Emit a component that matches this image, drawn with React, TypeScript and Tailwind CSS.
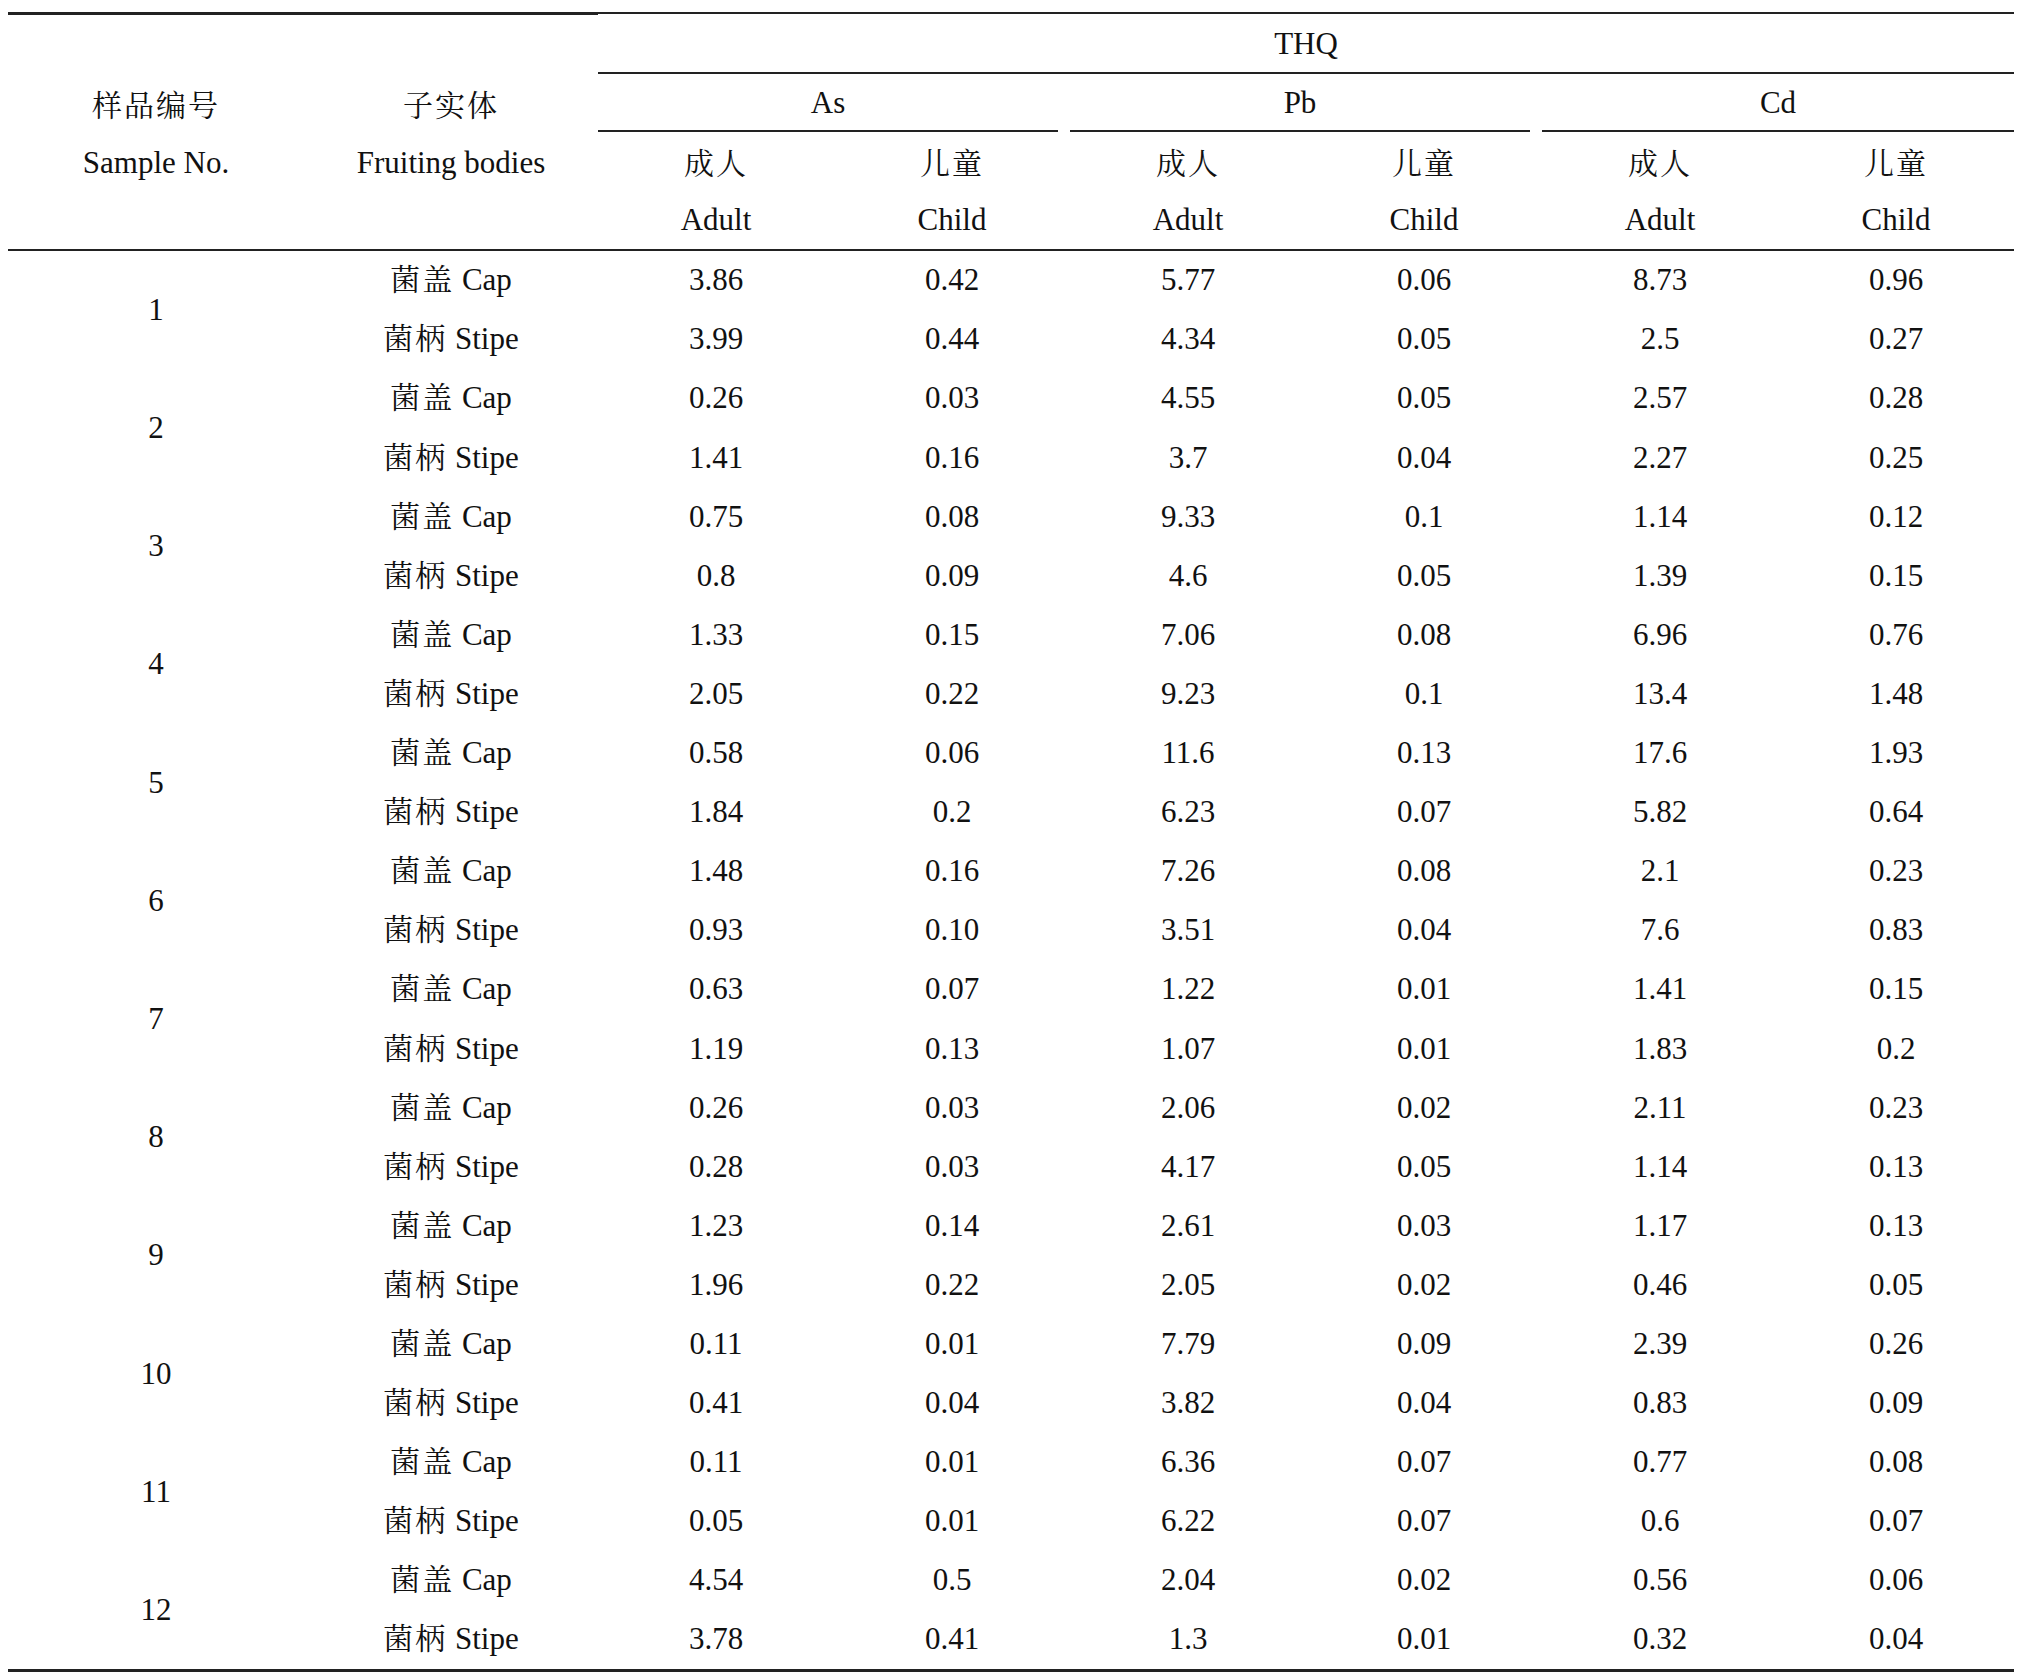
import React from 'react'

type Row = { part: 'cap' | 'stipe'; values: string[] }
type Sample = { no: number; rows: Row[] }

const data: [number, string[], string[]][] = [
  [1, ['3.86', '0.42', '5.77', '0.06', '8.73', '0.96'], ['3.99', '0.44', '4.34', '0.05', '2.5', '0.27']],
  [2, ['0.26', '0.03', '4.55', '0.05', '2.57', '0.28'], ['1.41', '0.16', '3.7', '0.04', '2.27', '0.25']],
  [3, ['0.75', '0.08', '9.33', '0.1', '1.14', '0.12'], ['0.8', '0.09', '4.6', '0.05', '1.39', '0.15']],
  [4, ['1.33', '0.15', '7.06', '0.08', '6.96', '0.76'], ['2.05', '0.22', '9.23', '0.1', '13.4', '1.48']],
  [5, ['0.58', '0.06', '11.6', '0.13', '17.6', '1.93'], ['1.84', '0.2', '6.23', '0.07', '5.82', '0.64']],
  [6, ['1.48', '0.16', '7.26', '0.08', '2.1', '0.23'], ['0.93', '0.10', '3.51', '0.04', '7.6', '0.83']],
  [7, ['0.63', '0.07', '1.22', '0.01', '1.41', '0.15'], ['1.19', '0.13', '1.07', '0.01', '1.83', '0.2']],
  [8, ['0.26', '0.03', '2.06', '0.02', '2.11', '0.23'], ['0.28', '0.03', '4.17', '0.05', '1.14', '0.13']],
  [9, ['1.23', '0.14', '2.61', '0.03', '1.17', '0.13'], ['1.96', '0.22', '2.05', '0.02', '0.46', '0.05']],
  [10, ['0.11', '0.01', '7.79', '0.09', '2.39', '0.26'], ['0.41', '0.04', '3.82', '0.04', '0.83', '0.09']],
  [11, ['0.11', '0.01', '6.36', '0.07', '0.77', '0.08'], ['0.05', '0.01', '6.22', '0.07', '0.6', '0.07']],
  [12, ['4.54', '0.5', '2.04', '0.02', '0.56', '0.06'], ['3.78', '0.41', '1.3', '0.01', '0.32', '0.04']],
]

const samples: Sample[] = data.map(([no, cap, stipe]) => ({
  no,
  rows: [
    { part: 'cap', values: cap },
    { part: 'stipe', values: stipe },
  ],
}))

const metals = ['As', 'Pb', 'Cd']

const Cjk = ({ children }: { children: React.ReactNode }) => (
  <span className="text-[30px] tracking-[2px]">{children}</span>
)

const PartLabel = ({ part }: { part: 'cap' | 'stipe' }) =>
  part === 'cap' ? (
    <span>
      <Cjk>菌盖</Cjk> Cap
    </span>
  ) : (
    <span>
      <Cjk>菌柄</Cjk> Stipe
    </span>
  )

export default function App() {
  return (
    <div className="min-h-screen bg-white pt-[12px] pl-[8px] text-[31px] text-[#111] font-['Liberation_Serif','Noto_Serif_CJK_SC','Noto_Sans_CJK_SC',serif]">
      <div className="w-[2006px]">
        {/* header */}
        <div className="flex">
          <div className="w-[590px] border-t-[3px] border-b-2 border-[#222] grid grid-cols-[296px_294px] items-center">
            <div className="flex flex-col items-center pt-[3px]">
              <div className="h-[57px] leading-[57px]"><Cjk>样品编号</Cjk></div>
              <div className="h-[57px] leading-[57px]">Sample No.</div>
            </div>
            <div className="flex flex-col items-center pt-[3px]">
              <div className="h-[57px] leading-[57px]"><Cjk>子实体</Cjk></div>
              <div className="h-[57px] leading-[57px]">Fruiting bodies</div>
            </div>
          </div>
          <div className="w-[1416px] border-t-2 border-b-2 border-[#222] flex flex-col">
            <div className="h-[60px] pt-[2px] flex items-center justify-center border-b-2 border-[#222]">THQ</div>
            <div className="grid grid-cols-3">
              {metals.map((m, i) => (
                <div key={m} className="flex flex-col">
                  <div className={`h-[58px] pt-[2px] flex items-center justify-center border-b-2 border-[#222] ${i < 2 ? 'mr-[12px]' : ''}`}>
                    {m}
                  </div>
                  <div className="grid grid-cols-2 h-[117px] pt-[2px]">
                    <div className="flex flex-col items-center justify-center">
                      <div className="h-[56px] leading-[56px]"><Cjk>成人</Cjk></div>
                      <div className="h-[56px] leading-[56px]">Adult</div>
                    </div>
                    <div className="flex flex-col items-center justify-center">
                      <div className="h-[56px] leading-[56px]"><Cjk>儿童</Cjk></div>
                      <div className="h-[56px] leading-[56px]">Child</div>
                    </div>
                  </div>
                </div>
              ))}
            </div>
          </div>
        </div>

        {/* body */}
        <div className="grid grid-cols-[296px_294px_repeat(6,236px)] auto-rows-[59.1px] border-b-[3px] border-[#222]">
          {samples.map((s) => (
            <React.Fragment key={s.no}>
              <div className="row-span-2 flex items-center justify-center">{s.no}</div>
              {s.rows.map((r) => (
                <React.Fragment key={r.part}>
                  <div className="flex items-center justify-center">
                    <PartLabel part={r.part} />
                  </div>
                  {r.values.map((v, j) => (
                    <div key={j} className="flex items-center justify-center">
                      {v}
                    </div>
                  ))}
                </React.Fragment>
              ))}
            </React.Fragment>
          ))}
        </div>
      </div>
    </div>
  )
}
